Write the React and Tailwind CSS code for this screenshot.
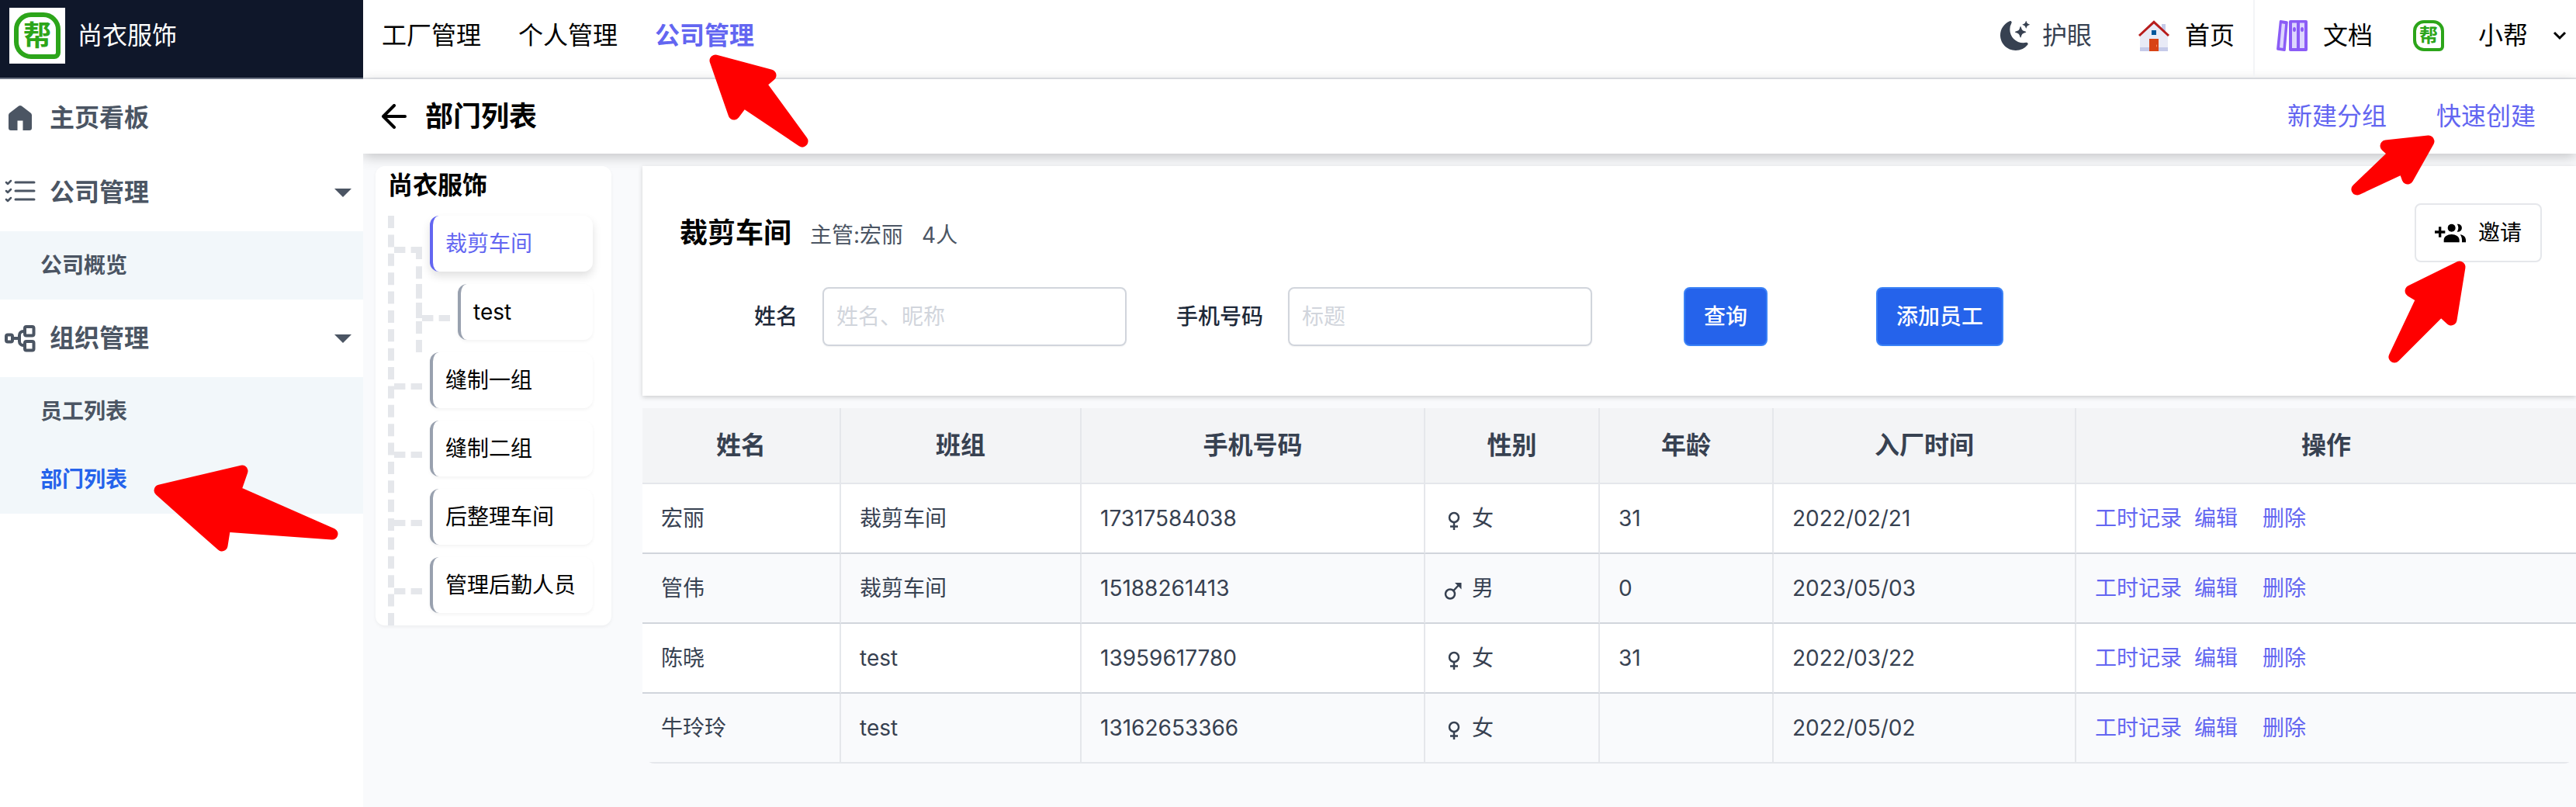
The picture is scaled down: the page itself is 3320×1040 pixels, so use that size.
import { useState } from "react";
import { BsMoonStarsFill } from "react-icons/bs";
import { FcHome } from "react-icons/fc";

const topNav = ["工厂管理", "个人管理", "公司管理"];

const groups = [
  { name: "缝制一组" },
  { name: "缝制二组" },
  { name: "后整理车间" },
  { name: "管理后勤人员" },
];

const columns = [
  { title: "姓名", width: "w-[256px]" },
  { title: "班组", width: "w-[310px]" },
  { title: "手机号码", width: "w-[443px]" },
  { title: "性别", width: "w-[225px]" },
  { title: "年龄", width: "w-[224px]" },
  { title: "入厂时间", width: "w-[390px]" },
  { title: "操作", width: "" },
];

const staff = [
  { name: "宏丽", group: "裁剪车间", phone: "17317584038", sex: "女", age: "31", date: "2022/02/21" },
  { name: "管伟", group: "裁剪车间", phone: "15188261413", sex: "男", age: "0", date: "2023/05/03" },
  { name: "陈晓", group: "test", phone: "13959617780", sex: "女", age: "31", date: "2022/03/22" },
  { name: "牛玲玲", group: "test", phone: "13162653366", sex: "女", age: "", date: "2022/05/02" },
];

function HomeIcon() {
  return (
    <svg width="40" height="36" viewBox="0 0 40 36" fill="currentColor">
      <path d="M18.2 2.6a3 3 0 0 1 3.6 0l11.7 8.8A4 4 0 0 1 35 14.500V31a3 3 0 0 1-3 3h-8.500V21.500h-7V34H8a3 3 0 0 1-3-3V14.500a4 4 0 0 1 1.500-3.100z" />
    </svg>
  );
}

function ChecklistIcon() {
  return (
    <svg width="40" height="36" viewBox="0 0 40 36" fill="none" stroke="currentColor" strokeLinecap="round" strokeLinejoin="round">
      <path strokeWidth="3" d="M14 5h24M14 16h24M14 27h24" />
      <path strokeWidth="2.500" d="M2 5l2 2 4-4M2 16l2 2 4-4M2 27l2 2 4-4" />
    </svg>
  );
}

function OrgIcon() {
  return (
    <svg width="40" height="36" viewBox="0 0 40 36" fill="none" stroke="currentColor" strokeWidth="4">
      <rect x="2" y="13.500" width="8" height="9" rx="2" />
      <rect x="26" y="3" width="11.500" height="11.500" rx="2" />
      <rect x="26" y="22" width="11.500" height="11.500" rx="2" />
      <path d="M10 18h8M26 9h-2a5 5 0 0 0-5 5v8a5 5 0 0 0 5 5h2" />
    </svg>
  );
}

function Caret() {
  return (
    <svg className="ml-auto" width="22" height="12" viewBox="0 0 22 12" fill="currentColor">
      <path d="M0 1h22L11 12z" />
    </svg>
  );
}

function BooksIcon() {
  return (
    <svg width="40" height="40" viewBox="0 0 40 40">
      <path fill="#8b5cf6" d="M5.500 0l8 1.200a1.500 1.500 0 0 1 1.300 1.600L11.800 38.600a1.500 1.500 0 0 1-1.700 1.400l-8.600-1.300A1.500 1.500 0 0 1 .1 37L3.800 1.300A1.500 1.500 0 0 1 5.500 0z" />
      <path fill="#ddd6fe" d="M6.800 4.200l4.300.7-2.700 31-4.400-.6z" />
      <rect x="16" width="24" height="40" rx="2" fill="#8b5cf6" />
      <path fill="#ddd6fe" d="M20 3.500h6V36h-6zM30 3.500h6V36h-6z" />
      <ellipse cx="23" cy="12" rx="2" ry="3" fill="#8b5cf6" />
      <ellipse cx="33" cy="12" rx="2" ry="3" fill="#8b5cf6" />
    </svg>
  );
}

function InviteIcon() {
  return (
    <svg width="40" height="26" viewBox="0 4 24 15.600" fill="currentColor">
      <path d="M8 10.200H5V7.200H3v3H0v2h3v3h2v-3h3z" />
      <circle cx="13" cy="8" r="3" />
      <path d="M7 19.200v-1.800C7 14.800 9.800 13 13 13s6 1.800 6 4.400v1.800zM17.200 5.100A3 3 0 1 1 17.200 10.900c.6-.8 1-1.800 1-2.900s-.4-2.100-1-2.900zM19.600 13.200c2.600.3 4.400 2 4.400 4.200v1.800h-3v-1.800c0-1.700-.5-3.100-1.400-4.200z" />
    </svg>
  );
}

function SexIcon({ sex }) {
  return (
    <svg className="shrink-0" width="24" height="32" viewBox="0 -6 24 32" fill="none" stroke="currentColor" strokeWidth="2.500">
      {sex === "男" ? (
        <>
          <circle cx="8" cy="17.500" r="6" />
          <path d="M12.500 13l7-7.500" />
          <path d="M14 3h8.500v8.500z" fill="currentColor" stroke="none" />
        </>
      ) : (
        <>
          <circle cx="13" cy="9" r="6" />
          <path d="M13 15v10M8 20.500h10" />
        </>
      )}
    </svg>
  );
}

function SideItem({ icon, label, open }) {
  return (
    <button className="flex h-[100px] w-full items-center gap-[18px] bg-white pr-[15px] pl-[6px] text-[32px] font-bold">
      {icon}
      {label}
      {open && <Caret />}
    </button>
  );
}

function SubItem({ label, active }) {
  return (
    <a
      href="#"
      className={`flex h-[88px] items-center pl-[52px] text-[28px] font-bold ${active ? "text-[#2563eb]" : ""}`}
    >
      {label}
    </a>
  );
}

function TreeNode({ label, active }) {
  return (
    <div className="flex h-[88px] gap-[10px] pr-6">
      <div className="mt-10 w-9 shrink-0 border-t-8 border-dashed border-gray-200"></div>
      <button
        className={`h-[72px] flex-1 rounded-xl border-l-4 bg-white pl-4 text-left text-[28px] whitespace-nowrap ${
          active
            ? "border-[#6366f1] text-[#6366f1] shadow-[0_6px_12px_rgba(0,0,0,0.12)]"
            : "border-gray-400 text-black shadow-[0_2px_4px_rgba(0,0,0,0.05)]"
        }`}
      >
        {label}
      </button>
    </div>
  );
}

export default function App() {
  const [name, setName] = useState("");
  const [phone, setPhone] = useState("");

  return (
    <div className="relative flex min-h-screen overflow-hidden bg-[#f9fafc] font-['Inter','Noto_Sans_CJK_SC',sans-serif] text-black">
      {/* sidebar */}
      <aside className="relative z-10 w-[468px] shrink-0 bg-white text-[#4b5563]">
        <div className="flex h-[102px] items-center gap-4 border-b-2 border-gray-500 bg-[#0f172a] pb-2 pl-3 text-[32px] text-white">
          <div className="flex size-[72px] items-center justify-center bg-white">
            <div className="flex size-[60px] items-center justify-center rounded-[22px] rounded-br-[8px] border-6 border-[#2ca51a] text-[36px] leading-none font-bold text-[#2ca51a]">
              帮
            </div>
          </div>
          尚衣服饰
        </div>
        <nav className="pb-6">
          <div className="-mb-1">
            <SideItem icon={<HomeIcon />} label="主页看板" />
          </div>
          <SideItem icon={<ChecklistIcon />} label="公司管理" open />
          <div className="bg-[#f2f7fa]">
            <SubItem label="公司概览" />
          </div>
          <SideItem icon={<OrgIcon />} label="组织管理" open />
          <div className="bg-[#f2f7fa]">
            <SubItem label="员工列表" />
            <SubItem label="部门列表" active />
          </div>
        </nav>
      </aside>

      <div className="min-w-0 flex-1 shadow-[0_0_12px_rgba(0,0,0,0.1)]">
        {/* top bar */}
        <header className="flex h-[102px] items-stretch border-b-2 border-gray-200 bg-white pl-6 text-[32px] whitespace-nowrap">
          <nav className="flex items-center gap-12 pb-2">
            {topNav.map((item) => (
              <a key={item} href="#" className={item === "公司管理" ? "font-bold text-[#6366f1]" : ""}>
                {item}
              </a>
            ))}
          </nav>
          <div className="ml-auto flex">
            <div className="flex items-center gap-14 border-r-2 border-gray-100 pr-6 pb-2">
              <button className="flex items-center gap-4 text-[#374151]">
                <BsMoonStarsFill size={38} />
                护眼
              </button>
              <a href="#" className="flex items-center gap-4">
                <FcHome size={48} />
                首页
              </a>
            </div>
            <div className="flex items-center gap-[52px] pr-3 pb-2 pl-7">
              <a href="#" className="flex items-center gap-5">
                <BooksIcon />
                文档
              </a>
              <button className="flex items-center">
                <span className="flex size-10 items-center justify-center rounded-[14px] rounded-br-[6px] border-4 border-[#2ca51a] text-[24px] leading-none font-bold text-[#2ca51a]">
                  帮
                </span>
                <span className="ml-11">小帮</span>
                <svg className="ml-8" width="18" height="12" viewBox="0 0 18 12" fill="none" stroke="currentColor" strokeWidth="3">
                  <path d="M2 2l7 7 7-7" />
                </svg>
              </button>
            </div>
          </div>
        </header>

        <div className="flex h-24 items-center bg-white pr-[52px] pl-6 shadow-[0_4px_16px_rgba(0,0,0,0.22)]">
          <button aria-label="返回">
            <svg width="32" height="32" viewBox="0 0 32 32" fill="none" stroke="currentColor" strokeWidth="4" strokeLinecap="round" strokeLinejoin="round">
              <path d="M30 16H2M16 2L2 16l14 14" />
            </svg>
          </button>
          <h1 className="ml-6 text-[36px] font-bold">部门列表</h1>
          <div className="ml-auto flex gap-16 text-[32px] text-[#6366f1]">
            <button>新建分组</button>
            <button>快速创建</button>
          </div>
        </div>

        <main className="flex items-start gap-10 pt-4 pl-4">
          {/* department tree */}
          <section className="relative w-[304px] shrink-0 overflow-hidden rounded-xl bg-white pl-4 shadow-[0_2px_4px_rgba(0,0,0,0.05)]">
            <h2 className="h-16 text-[32px] leading-[50px] font-bold">尚衣服饰</h2>
            <div className="border-l-8 border-dashed border-gray-200">
              <div className="relative">
                <TreeNode label="裁剪车间" active />
                <div className="absolute top-10 left-7 h-[92px] w-2 border-r-8 border-dashed border-gray-200"></div>
              </div>
              <div className="ml-7 border-l-8 border-dashed border-gray-200">
                <TreeNode label="test" />
              </div>
              {groups.map((g) => (
                <TreeNode key={g.name} label={g.name} />
              ))}
            </div>
          </section>

          <div className="relative min-w-0 flex-1">
            <section className="bg-white pt-12 pb-16 pl-12 shadow-[0_2px_6px_rgba(0,0,0,0.18)]">
              <div className="flex items-center justify-between pr-11 text-[28px]">
                <div className="flex items-baseline gap-6 text-[#4b5563]">
                  <h2 className="text-[36px] font-bold text-black">裁剪车间</h2>
                  <span>主管:宏丽</span>
                  <span>4人</span>
                </div>
                <button className="flex h-[76px] items-center gap-4 rounded-lg border-2 border-gray-200 px-6">
                  <InviteIcon />
                  邀请
                </button>
              </div>
              <form className="mt-8 ml-24 flex items-center text-[28px]" onSubmit={(e) => e.preventDefault()}>
                <label htmlFor="name" className="font-medium text-gray-800">
                  姓名
                </label>
                <input
                  id="name"
                  type="text"
                  value={name}
                  onChange={(e) => setName(e.target.value)}
                  placeholder="姓名、昵称"
                  className="ml-8 h-[76px] w-[392px] rounded-lg border-2 border-gray-300 px-4 shadow-xs placeholder:text-gray-300"
                />
                <label htmlFor="phone" className="ml-16 font-medium text-gray-800">
                  手机号码
                </label>
                <input
                  id="phone"
                  type="text"
                  value={phone}
                  onChange={(e) => setPhone(e.target.value)}
                  placeholder="标题"
                  className="ml-8 h-[76px] w-[392px] rounded-lg border-2 border-gray-300 px-4 shadow-xs placeholder:text-gray-300"
                />
                <button type="submit" className="ml-[118px] h-[76px] rounded-lg border-2 border-[#3b82f6] bg-[#2563eb] px-6 font-medium text-white">
                  查询
                </button>
                <button type="button" className="ml-[140px] h-[76px] rounded-lg border-2 border-[#3b82f6] bg-[#2563eb] px-6 font-medium text-white">
                  添加员工
                </button>
              </form>
            </section>

            {/* staff table */}
            <div className="mt-4 overflow-hidden rounded-b-2xl">
              <table className="w-full table-fixed border-separate border-spacing-0 text-[28px] text-[#374151]">
                <thead>
                  <tr className="bg-gray-100">
                    {columns.map((c) => (
                      <th
                        key={c.title}
                        className={`h-[98px] border-r-2 border-b-2 border-gray-200 text-[32px] font-semibold last:border-r-0 ${c.width}`}
                      >
                        {c.title}
                      </th>
                    ))}
                  </tr>
                </thead>
                <tbody className="[&_td]:h-[90px] [&_td]:border-r-2 [&_td]:border-b-2 [&_td]:border-r-gray-200 [&_td]:border-b-gray-300 [&_td]:px-6 [&_td:last-child]:border-r-0 [&_tr:last-child_td]:border-b-gray-200">
                  {staff.map((s) => (
                    <tr key={s.name} className="odd:bg-white even:bg-[#f9fafc]">
                      <td>{s.name}</td>
                      <td>{s.group}</td>
                      <td>{s.phone}</td>
                      <td>
                        <div className="flex items-center gap-3">
                          <SexIcon sex={s.sex} />
                          {s.sex}
                        </div>
                      </td>
                      <td>{s.age}</td>
                      <td>{s.date}</td>
                      <td>
                        <div className="flex text-[#6366f1]">
                          <a href="#">工时记录</a>
                          <a href="#" className="ml-4">编辑</a>
                          <a href="#" className="ml-8">删除</a>
                        </div>
                      </td>
                    </tr>
                  ))}
                </tbody>
              </table>
            </div>
          </div>
        </main>
      </div>

      {/* red pointers laid over the page */}
      <svg className="pointer-events-none absolute top-0 left-0 z-20" width="1060" height="720" fill="#f00" stroke="#f00" strokeWidth="15" strokeLinejoin="round">
        <path d="M206 632L312 607L303 633L428 688L290 678L286 703z" />
        <path d="M922 78L993 97L980 108L1034 182L958 131L946 147z" />
      </svg>
      <svg className="pointer-events-none absolute top-0 right-0 z-20" width="300" height="480" fill="#f00" stroke="#f00" strokeWidth="15" strokeLinejoin="round">
        <path d="M110 182L83 230L78 216L18 244L66 198L55 188z" />
        <path d="M150 344L139 412L126 400L66 460L102 384L87 375z" />
      </svg>
    </div>
  );
}
